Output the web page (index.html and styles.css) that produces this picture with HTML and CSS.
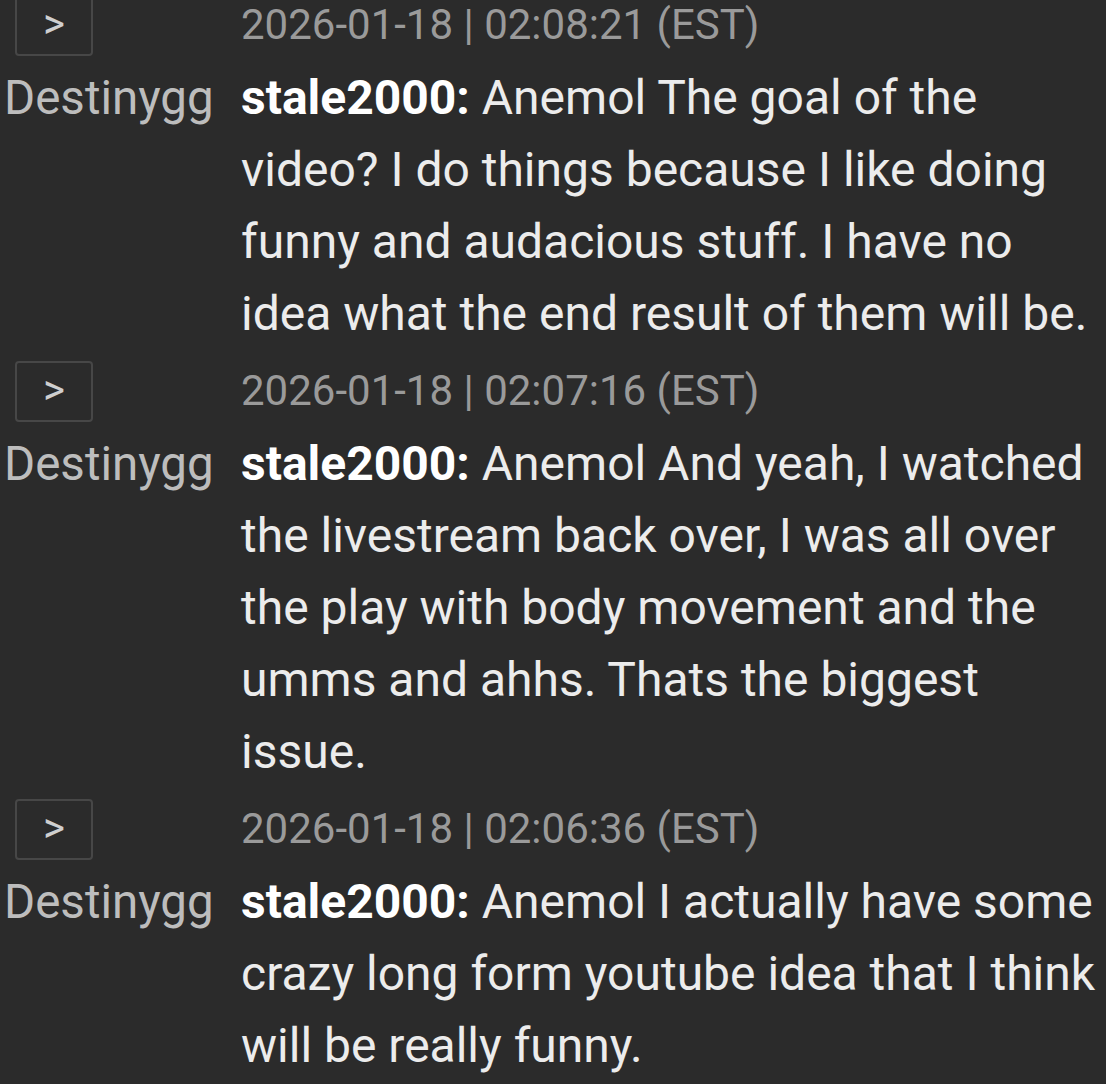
FILE: index.html
```html
<!DOCTYPE html>
<html>
<head>
<meta charset="utf-8">
<link rel="stylesheet" href="styles.css">
</head>
<body>
<div class="log">
  <div class="entry">
    <div class="side"><span class="btn">&gt;</span></div>
    <div class="time">2026-01-18 | 02:08:21 (EST)</div>
    <div class="channel">Destinygg</div>
    <div class="msg"><b class="user">stale2000:</b> Anemol The goal of the video? I do things because I like doing funny and audacious stuff. I have no idea what the end result of them will be.</div>
  </div>
  <div class="entry">
    <div class="side"><span class="btn">&gt;</span></div>
    <div class="time">2026-01-18 | 02:07:16 (EST)</div>
    <div class="channel">Destinygg</div>
    <div class="msg"><b class="user">stale2000:</b> Anemol And yeah, I watched the livestream back over, I was all over the play with body movement and the umms and ahhs. Thats the biggest issue.</div>
  </div>
  <div class="entry">
    <div class="side"><span class="btn">&gt;</span></div>
    <div class="time">2026-01-18 | 02:06:36 (EST)</div>
    <div class="channel">Destinygg</div>
    <div class="msg"><b class="user">stale2000:</b> Anemol I actually have some crazy long form youtube idea that I think will be really funny.</div>
  </div>
</div>
</body>
</html>
```

FILE: styles.css
```css
html, body {
  margin: 0;
  padding: 0;
  background: #2b2b2b;
}
body {
  font-family: Roboto, "Noto Sans", sans-serif;
  font-size: 48px;
  color: #ececec;
  overflow: hidden;
}
.log {
  display: flex;
  flex-direction: column;
  gap: 4px;
  margin-top: -12px;
}
.entry {
  display: grid;
  grid-template-columns: 241px 1fr;
  grid-template-rows: 74px auto;
  align-items: center;
}
.side {
  padding-left: 15px;
  display: flex;
  align-items: center;
}
.btn {
  box-sizing: border-box;
  width: 78px;
  height: 61px;
  border: 2px solid #474747;
  border-radius: 4px;
  display: flex;
  align-items: center;
  justify-content: center;
  color: #cfcfcf;
  font-size: 42px;
  line-height: 1;
  padding-bottom: 3px;
}
.time {
  color: #9a9a9a;
  font-size: 42px;
  line-height: 74px;
  white-space: nowrap;
}
.channel {
  align-self: start;
  padding-left: 4px;
  color: #bdbdbd;
  font-size: 47.5px;
  line-height: 72px;
}
.msg {
  line-height: 72px;
  padding-right: 6px;
}
.user {
  font-weight: 700;
  color: #ffffff;
}
```
